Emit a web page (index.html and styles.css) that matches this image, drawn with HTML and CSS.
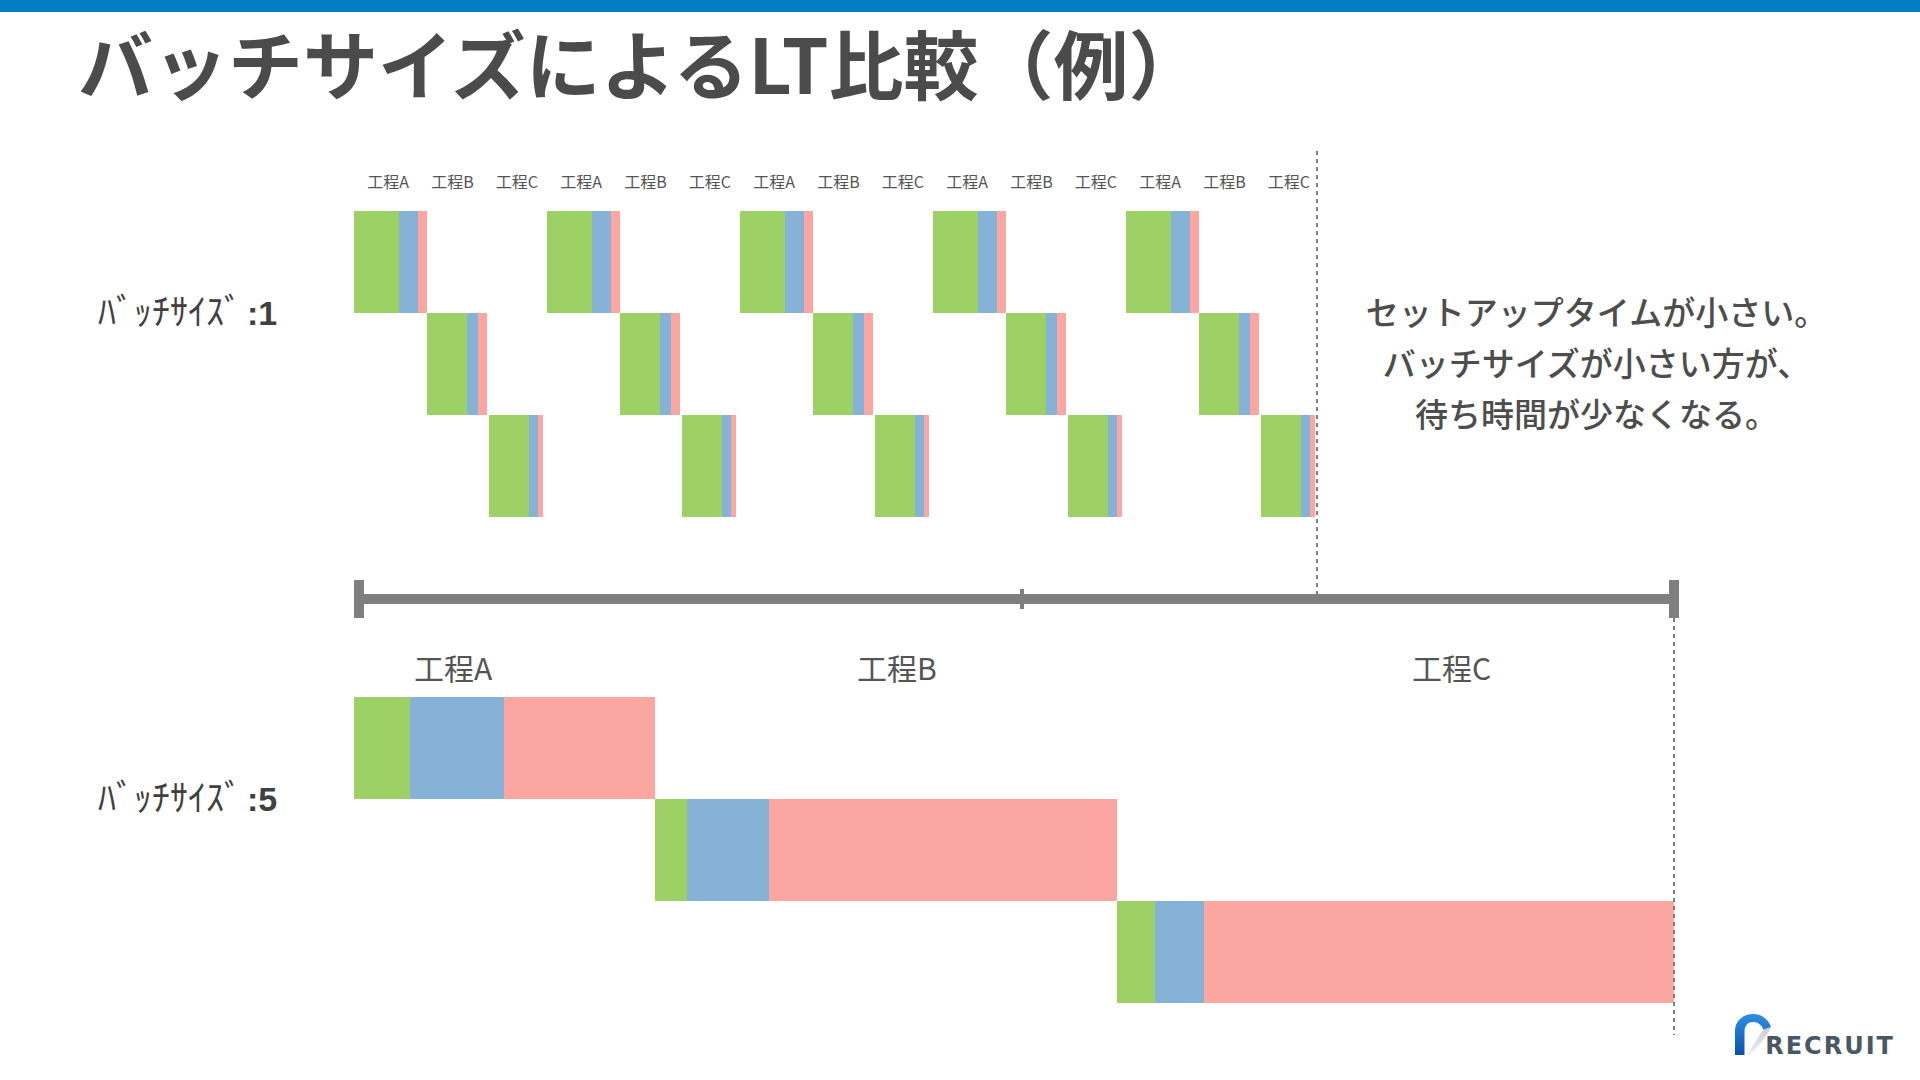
FILE: index.html
```html
<!DOCTYPE html>
<html lang="ja">
<head>
<meta charset="utf-8">
<title>バッチサイズによるLT比較（例）</title>
<link rel="stylesheet" href="styles.css">
</head>
<body>
<div class="slide">
  <div class="topbar"></div>
  <h1 class="title">バッチサイズによるLT比較（例）</h1>

  <section class="batch batch-small">
    <div class="batch-label">ﾊﾞｯﾁｻｲｽﾞ<b>:1</b></div>
    <div class="step-labels">
      <span>工程A</span><span>工程B</span><span>工程C</span>
      <span>工程A</span><span>工程B</span><span>工程C</span>
      <span>工程A</span><span>工程B</span><span>工程C</span>
      <span>工程A</span><span>工程B</span><span>工程C</span>
      <span>工程A</span><span>工程B</span><span>工程C</span>
    </div>
    <div class="lane lane-a">
      <div class="job job-a"><i class="g"></i><i class="b"></i><i class="p"></i></div>
      <div class="job job-a"><i class="g"></i><i class="b"></i><i class="p"></i></div>
      <div class="job job-a"><i class="g"></i><i class="b"></i><i class="p"></i></div>
      <div class="job job-a"><i class="g"></i><i class="b"></i><i class="p"></i></div>
      <div class="job job-a"><i class="g"></i><i class="b"></i><i class="p"></i></div>
    </div>
    <div class="lane lane-b">
      <div class="job job-b"><i class="g"></i><i class="b"></i><i class="p"></i></div>
      <div class="job job-b"><i class="g"></i><i class="b"></i><i class="p"></i></div>
      <div class="job job-b"><i class="g"></i><i class="b"></i><i class="p"></i></div>
      <div class="job job-b"><i class="g"></i><i class="b"></i><i class="p"></i></div>
      <div class="job job-b"><i class="g"></i><i class="b"></i><i class="p"></i></div>
    </div>
    <div class="lane lane-c">
      <div class="job job-c"><i class="g"></i><i class="b"></i><i class="p"></i></div>
      <div class="job job-c"><i class="g"></i><i class="b"></i><i class="p"></i></div>
      <div class="job job-c"><i class="g"></i><i class="b"></i><i class="p"></i></div>
      <div class="job job-c"><i class="g"></i><i class="b"></i><i class="p"></i></div>
      <div class="job job-c"><i class="g"></i><i class="b"></i><i class="p"></i></div>
    </div>
    <div class="divider divider-small"></div>
    <div class="note">
      <p>セットアップタイムが小さい。</p>
      <p>バッチサイズが小さい方が、</p>
      <p>待ち時間が少なくなる。</p>
    </div>
  </section>

  <div class="timeline">
    <span class="cap"></span>
    <span class="axis"></span>
    <span class="cap"></span>
    <span class="tick"></span>
  </div>

  <section class="batch batch-large">
    <div class="big-labels">
      <span class="bl-a">工程A</span>
      <span class="bl-b">工程B</span>
      <span class="bl-c">工程C</span>
    </div>
    <div class="batch-label">ﾊﾞｯﾁｻｲｽﾞ<b>:5</b></div>
    <div class="big-lane big-lane-a"><div class="job big-a"><i class="g"></i><i class="b"></i><i class="p"></i></div></div>
    <div class="big-lane big-lane-b"><div class="job big-b"><i class="g"></i><i class="b"></i><i class="p"></i></div></div>
    <div class="big-lane big-lane-c"><div class="job big-c"><i class="g"></i><i class="b"></i><i class="p"></i></div></div>
    <div class="divider divider-large"></div>
    <div class="logo">
      <svg class="logo-mark" width="38" height="42" viewBox="0 0 38 42" aria-hidden="true">
        <defs>
          <linearGradient id="archBlue" x1="0" y1="0" x2="0" y2="1">
            <stop offset="0" stop-color="#2f8fe0"/>
            <stop offset="1" stop-color="#0a4fb0"/>
          </linearGradient>
          <linearGradient id="archGray" x1="0" y1="0" x2="0" y2="1">
            <stop offset="0" stop-color="#c9ced3"/>
            <stop offset="1" stop-color="#eef0f2"/>
          </linearGradient>
        </defs>
        <path d="M28.5 15.5 L36 13 C33 21 25 30 15 41 L12 41 C18 31 24 22 28.5 15.5 Z" fill="url(#archGray)"/>
        <path d="M0 41 L0 17 C0 7 8 0 18 0 C27 0 33.5 5.5 36 13 L28.5 15.5 C26.5 10.5 22.5 8 18 8 C12.5 8 9.5 12 9.5 18 L9.5 41 Z" fill="url(#archBlue)"/>
      </svg>
      <span class="logo-text">RECRUIT</span>
    </div>
  </section>
</div>
</body>
</html>
```

FILE: styles.css
```css
html, body {
  margin: 0;
  padding: 0;
  background: #ffffff;
}

body {
  font-family: "Noto Sans CJK JP", "Noto Sans", sans-serif;
  color: #4d4d4d;
}

.slide {
  width: 1920px;
  height: 1080px;
  overflow: hidden;
  display: flex;
  flex-direction: column;
  background: #ffffff;
}

.topbar {
  height: 12px;
  background: #007dc5;
  flex: none;
}

.title {
  margin: 14px 0 0 0;
  padding-left: 78px;
  font-size: 75px;
  line-height: 72px;
  font-weight: 700;
  color: #4b4b4b;
  letter-spacing: 0;
  flex: none;
}

/* ---------- batch sections ---------- */

.batch {
  display: grid;
  flex: none;
}

.batch-small {
  margin-top: 53px;
  grid-template-columns: 354px 963px 1fr;
  grid-template-rows: 60px 102px 102px 102px 77px;
}

.batch-label {
  grid-column: 1;
  align-self: center;
  padding-left: 98px;
  margin-bottom: 4px;
  font-size: 36px;
  line-height: 40px;
  color: #404040;
  font-weight: 400;
  white-space: nowrap;
}

.batch-label b {
  font-family: "Liberation Sans", Arial, sans-serif;
  font-weight: 700;
  font-size: 34px;
  margin-left: 5px;
}

.batch-small .batch-label {
  grid-row: 2 / 4;
}

.step-labels {
  grid-column: 2;
  grid-row: 1;
  align-self: center;
  margin-left: 2px;
  width: 965px;
  display: grid;
  grid-template-columns: repeat(15, 1fr);
  font-size: 16px;
  line-height: 20px;
  color: #555555;
  text-align: center;
  white-space: nowrap;
}

.lane {
  grid-column: 2;
  display: flex;
}

.lane-a { grid-row: 2; gap: 120px; padding-left: 0; }
.lane-b { grid-row: 3; gap: 133px; padding-left: 73px; }
.lane-c { grid-row: 4; gap: 139px; padding-left: 135px; }

.job {
  display: flex;
  height: 100%;
}

.job i {
  display: block;
  height: 100%;
}

.job .g { background: #9dd166; }
.job .b { background: #86b2d7; }
.job .p { background: #fca6a2; }

.job-a .g { width: 45px; }
.job-a .b { width: 19px; }
.job-a .p { width: 9px; }

.job-b .g { width: 40px; }
.job-b .b { width: 11px; }
.job-b .p { width: 9px; }

.job-c .g { width: 40px; }
.job-c .b { width: 9px; }
.job-c .p { width: 5px; }

.divider {
  grid-column: 3;
  grid-row: 1 / -1;
  width: 2px;
  margin-left: -1px;
  background-image: linear-gradient(to bottom, #7d7d7d 55%, rgba(255,255,255,0) 55%);
  background-size: 2px 8px;
  background-repeat: repeat-y;
}

.note {
  grid-column: 3;
  grid-row: 2 / 5;
  align-self: center;
  padding-right: 44px;
  margin-bottom: 3px;
  text-align: center;
  font-size: 33px;
  line-height: 51px;
  font-weight: 500;
  color: #4d4d4d;
}

.note p {
  margin: 0;
  white-space: nowrap;
}

/* ---------- timeline ---------- */

.timeline {
  position: relative;
  flex: none;
  margin-top: -14px;
  margin-left: 354px;
  width: 1325px;
  height: 38px;
  display: flex;
  align-items: center;
}

.timeline .cap {
  width: 10px;
  height: 38px;
  background: #7f7f7f;
  flex: none;
}

.timeline .axis {
  flex: 1;
  height: 10px;
  background: #7f7f7f;
}

.timeline .tick {
  position: absolute;
  left: 666px;
  top: 9px;
  width: 4px;
  height: 20px;
  background: #7f7f7f;
}

/* ---------- large batch ---------- */

.batch-large {
  flex: 1;
  grid-template-columns: 354px 1320px 1fr;
  grid-template-rows: 79px 102px 102px 102px 1fr;
}

.big-labels {
  grid-column: 2;
  grid-row: 1;
  display: grid;
  grid-template-columns: 301px 462px 557px;
  align-items: center;
  padding-top: 19px;
  font-size: 30px;
  line-height: 34px;
  color: #555555;
  white-space: nowrap;
}

.bl-a { padding-left: 60px; }
.bl-b { padding-left: 202px; }
.bl-c { padding-left: 295px; }

.batch-large .batch-label {
  grid-row: 2 / 4;
}

.big-lane {
  grid-column: 2;
  display: flex;
}

.big-lane-a { grid-row: 2; }
.big-lane-b { grid-row: 3; padding-left: 301px; }
.big-lane-c { grid-row: 4; padding-left: 763px; }

.big-a .g { width: 56px; }
.big-a .b { width: 94px; }
.big-a .p { width: 151px; }

.big-b .g { width: 32px; }
.big-b .b { width: 82px; }
.big-b .p { width: 348px; }

.big-c .g { width: 38px; }
.big-c .b { width: 49px; }
.big-c .p { width: 470px; }

.divider-large {
  margin-bottom: 45px;
}

/* ---------- logo ---------- */

.logo {
  grid-column: 3;
  grid-row: 5;
  justify-self: end;
  align-self: start;
  margin-top: 11px;
  margin-right: 25px;
  display: flex;
  align-items: flex-end;
}

.logo-mark {
  display: block;
  flex: none;
}

.logo-text {
  margin-left: -8px;
  font-family: "DejaVu Sans", "Liberation Sans", sans-serif;
  font-weight: 700;
  font-size: 24px;
  line-height: 20px;
  letter-spacing: 2px;
  color: #4a5864;
  padding-bottom: 0;
}
```
